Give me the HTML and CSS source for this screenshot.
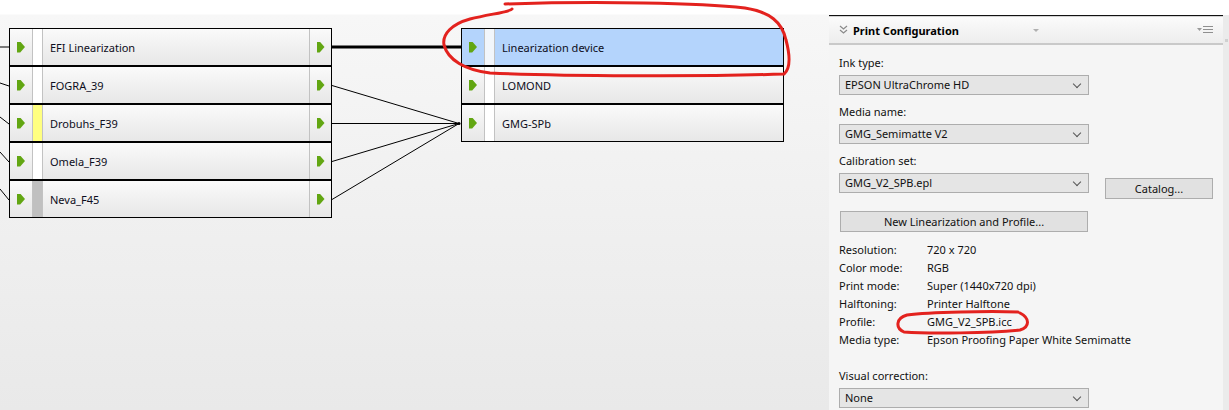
FILE: index.html
```html
<!DOCTYPE html>
<html lang="en">
<head>
  <meta charset="UTF-8" />
  <title>Print Configuration</title>
  <link rel="stylesheet" href="styles.css">
</head>
<body>
  <div class="screen">

    <div class="canvas">
      <svg class="wires" width="829" height="410" viewBox="0 0 829 410">
        <g stroke="#000" fill="none">
          <line x1="0" y1="47" x2="9" y2="47" stroke-width="1"/>
          <line x1="0" y1="83" x2="9" y2="86"/>
          <line x1="0" y1="117" x2="9" y2="124"/>
          <line x1="0" y1="152" x2="9" y2="162"/>
          <line x1="0" y1="189" x2="9" y2="200"/>
          <line x1="332" y1="47" x2="461" y2="47" stroke-width="3"/>
          <line x1="332" y1="85.5" x2="459" y2="123.5"/>
          <line x1="332" y1="123.5" x2="459" y2="123.5"/>
          <line x1="332" y1="161.5" x2="459" y2="123.5"/>
          <line x1="332" y1="199.5" x2="459" y2="123.5"/>
        </g>
        <circle cx="459" cy="123.5" r="1.5" fill="#000"/>
      </svg>

      <div class="node node-src">
        <div class="node-row">
          <span class="port"><i class="arrow"></i></span>
          <span class="strip"></span>
          <span class="node-name">EFI Linearization</span>
          <span class="port port-out"><i class="arrow"></i></span>
        </div>
        <div class="node-row">
          <span class="port"><i class="arrow"></i></span>
          <span class="strip"></span>
          <span class="node-name">FOGRA_39</span>
          <span class="port port-out"><i class="arrow"></i></span>
        </div>
        <div class="node-row">
          <span class="port"><i class="arrow"></i></span>
          <span class="strip strip-yellow"></span>
          <span class="node-name">Drobuhs_F39</span>
          <span class="port port-out"><i class="arrow"></i></span>
        </div>
        <div class="node-row">
          <span class="port"><i class="arrow"></i></span>
          <span class="strip"></span>
          <span class="node-name">Omela_F39</span>
          <span class="port port-out"><i class="arrow"></i></span>
        </div>
        <div class="node-row">
          <span class="port"><i class="arrow"></i></span>
          <span class="strip strip-gray"></span>
          <span class="node-name">Neva_F45</span>
          <span class="port port-out"><i class="arrow"></i></span>
        </div>
      </div>

      <div class="node node-dst">
        <div class="node-row selected">
          <span class="port"><i class="arrow"></i></span>
          <span class="strip"></span>
          <span class="node-name">Linearization device</span>
        </div>
        <div class="node-row">
          <span class="port"><i class="arrow"></i></span>
          <span class="strip"></span>
          <span class="node-name">LOMOND</span>
        </div>
        <div class="node-row">
          <span class="port"><i class="arrow"></i></span>
          <span class="strip"></span>
          <span class="node-name">GMG-SPb</span>
        </div>
      </div>
    </div>

    <div class="panel">
      <div class="panel-inner">
        <div class="panel-header">
          <svg class="collapse" width="9" height="10" viewBox="0 0 9 10">
            <polyline points="1,1 4.5,4 8,1" fill="none" stroke="#8a8a8a" stroke-width="1.2"/>
            <polyline points="1,5 4.5,8 8,5" fill="none" stroke="#8a8a8a" stroke-width="1.2"/>
          </svg>
          <span class="panel-title">Print Configuration</span>
          <span class="tiny-caret"></span>
          <svg class="menu-icon" width="16" height="10" viewBox="0 0 16 10">
            <polygon points="0,3 5,3 2.5,6" fill="#9a9a9a"/>
            <rect x="6" y="1" width="10" height="1" fill="#8f8f8f"/>
            <rect x="6" y="4" width="10" height="1" fill="#8f8f8f"/>
            <rect x="6" y="7" width="10" height="1" fill="#8f8f8f"/>
          </svg>
        </div>

        <div class="panel-body">
          <div class="field">
            <div class="field-label">Ink type:</div>
            <div class="combo">EPSON UltraChrome HD</div>
          </div>
          <div class="field">
            <div class="field-label">Media name:</div>
            <div class="combo">GMG_Semimatte V2</div>
          </div>
          <div class="field">
            <div class="field-label">Calibration set:</div>
            <div class="field-row">
              <div class="combo">GMG_V2_SPB.epl</div>
              <button class="btn btn-catalog">Catalog...</button>
            </div>
          </div>

          <button class="btn btn-wide">New Linearization and Profile...</button>

          <dl class="info">
            <dt>Resolution:</dt><dd>720 x 720</dd>
            <dt>Color mode:</dt><dd>RGB</dd>
            <dt>Print mode:</dt><dd>Super (1440x720 dpi)</dd>
            <dt>Halftoning:</dt><dd>Printer Halftone</dd>
            <dt>Profile:</dt><dd>GMG_V2_SPB.icc</dd>
            <dt>Media type:</dt><dd>Epson Proofing Paper White Semimatte</dd>
          </dl>

          <div class="field field-last">
            <div class="field-label">Visual correction:</div>
            <div class="combo">None</div>
          </div>
        </div>
      </div>
      <div class="scroll-strip"><span class="scroll-tick"></span></div>
    </div>

    <svg class="marks" width="1229" height="410" viewBox="0 0 1229 410">
      <path d="M505 4 C600 1 700 3 745 8 C770 12 782 22 786 40 C790 55 791 68 784 74 C700 77 560 76 490 73 C465 70 448 60 444 45 C442 34 452 24 470 19 C490 14 510 12 512 9"
            fill="none" stroke="#e3221e" stroke-width="3" stroke-linecap="round"/>
      <path d="M1018 312 C990 311 930 312 907 315 C896 318 895 328 904 332 C930 334 990 333 1020 330 C1030 327 1030 318 1020 313"
            fill="none" stroke="#e3221e" stroke-width="3" stroke-linecap="round"/>
    </svg>
  </div>
</body>
</html>
```

FILE: styles.css
```css
* {
  box-sizing: border-box;
}

body {
  margin: 0;
  padding: 0;
  font-family: "Noto Sans", "Open Sans", sans-serif;
  font-size: 11px;
  color: #111;
  background: #fff;
}

.screen {
  position: relative;
  display: flex;
  width: 1229px;
  height: 410px;
  overflow: hidden;
}

/* ---- node canvas ---- */

.canvas {
  position: relative;
  width: 829px;
  height: 410px;
  background: linear-gradient(#fff 0, #fff 14px, #f7f7f7 15px, #e9e9e9 100%);
}

.wires {
  position: absolute;
  left: 0;
  top: 0;
}

.node {
  position: absolute;
  top: 28px;
  width: 323px;
  border: 1px solid #000;
  background: #fff;
}

.node-src {
  left: 9px;
}

.node-dst {
  left: 461px;
}

.node-row {
  display: flex;
  height: 36px;
  background: linear-gradient(#fafafa, #e7e7e7);
}

.node-row + .node-row {
  border-top: 2px solid #000;
  height: 38px;
}

.port {
  width: 22px;
  display: flex;
  align-items: center;
  justify-content: center;
}

.port-out {
  border-left: 1px solid #c2c2c2;
}

.arrow {
  display: block;
  width: 8px;
  height: 11px;
  background: #62a612;
  clip-path: polygon(0 0, 40% 0, 100% 50%, 40% 100%, 0 100%);
}

.strip {
  width: 11px;
  background: #fff;
  border-left: 1px solid #c2c2c2;
  border-right: 1px solid #c2c2c2;
}

.strip-yellow {
  background: #ffff80;
}

.strip-gray {
  background: #c0c0c0;
}

.node-name {
  flex: 1;
  display: flex;
  align-items: center;
  padding-left: 7px;
  color: #0d0d20;
}

.selected {
  background: #b4d4fc;
}

.selected .strip {
  background: #f2f6fb;
}

/* ---- right panel ---- */

.panel {
  display: flex;
  width: 400px;
  height: 410px;
  padding-top: 15px;
  background: #fff;
}

.panel-inner {
  flex: 1;
  border-top: 1px solid #111;
  background: #f5f5f5;
}

.panel-header {
  display: flex;
  align-items: center;
  height: 29px;
  padding: 0 10px 0 10px;
  border-top: 1px solid #d2d2d2;
  border-bottom: 2px solid #c9c9c9;
  background: linear-gradient(#fbfbfb, #ededed);
}

.collapse {
  margin-right: 5px;
}

.panel-title {
  font-weight: bold;
  color: #000;
}

.tiny-caret {
  width: 0;
  height: 0;
  margin-left: 74px;
  border-left: 3px solid transparent;
  border-right: 3px solid transparent;
  border-top: 3px solid #b0b0b0;
}

.menu-icon {
  margin-left: auto;
}

.panel-body {
  padding: 10px 10px 0 10px;
}

.field {
  margin-bottom: 9px;
}

.field-label {
  line-height: 16px;
  margin-bottom: 4px;
}

.field-row {
  display: flex;
  align-items: flex-start;
}

.combo {
  position: relative;
  width: 250px;
  height: 20px;
  line-height: 18px;
  padding-left: 5px;
  border: 1px solid #adadad;
  background: #e5e5e5;
}

.combo::after {
  content: "";
  position: absolute;
  right: 8px;
  top: 5px;
  width: 5px;
  height: 5px;
  border-right: 1px solid #555;
  border-bottom: 1px solid #555;
  transform: rotate(45deg);
}

.btn {
  display: block;
  height: 21px;
  padding: 0;
  font-family: inherit;
  font-size: 11px;
  color: #111;
  border: 1px solid #adadad;
  background: #e1e1e1;
}

.btn-catalog {
  width: 108px;
  margin-top: 5px;
  margin-left: 16px;
}

.btn-wide {
  width: 248px;
  margin: 12px 0 0 1px;
}

.info {
  display: grid;
  grid-template-columns: 88px auto;
  margin: 9px 0 0 0;
  line-height: 18px;
}

.info dt,
.info dd {
  margin: 0;
}

.field-last {
  margin-top: 19px;
}

.scroll-strip {
  width: 7px;
  padding-top: 24px;
  background: #ebebeb;
}

.scroll-tick {
  display: block;
  width: 3px;
  height: 3px;
  margin-left: 2px;
  background: #d0d0d0;
}

.marks {
  position: absolute;
  left: 0;
  top: 0;
  pointer-events: none;
}
```
